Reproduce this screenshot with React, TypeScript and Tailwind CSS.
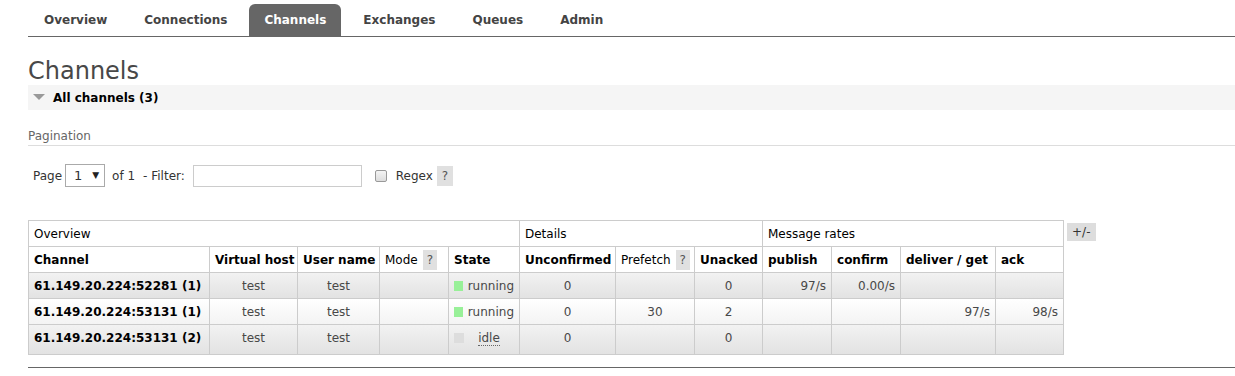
import React from 'react';

const tabs = ['Overview', 'Connections', 'Channels', 'Exchanges', 'Queues', 'Admin'];

const colWidths = [181, 88, 82, 69, 71, 96, 79, 68, 69, 69, 95, 68];

type Row = {
  channel: string;
  vhost: string;
  user: string;
  state: 'running' | 'idle';
  unconfirmed: string;
  prefetch: string;
  unacked: string;
  publish: string;
  confirm: string;
  deliver: string;
  ack: string;
};

const rows: Row[] = [
  { channel: '61.149.20.224:52281 (1)', vhost: 'test', user: 'test', state: 'running', unconfirmed: '0', prefetch: '', unacked: '0', publish: '97/s', confirm: '0.00/s', deliver: '', ack: '' },
  { channel: '61.149.20.224:53131 (1)', vhost: 'test', user: 'test', state: 'running', unconfirmed: '0', prefetch: '30', unacked: '2', publish: '', confirm: '', deliver: '97/s', ack: '98/s' },
  { channel: '61.149.20.224:53131 (2)', vhost: 'test', user: 'test', state: 'idle', unconfirmed: '0', prefetch: '', unacked: '0', publish: '', confirm: '', deliver: '', ack: '' },
];

const Help = () => (
  <span className="inline-block bg-[#e0e0e0] px-[4px] leading-[20px] text-[#555] font-normal ml-[5px]">?</span>
);

const th = 'border border-[#ccc] px-[5px] h-[26px] text-left font-bold text-black whitespace-nowrap';
const td = 'border border-[#ccc] px-[5px] whitespace-nowrap text-[#484848]';

export default function App() {
  return (
    <div className="bg-white min-h-[376px] text-[12px] text-[#484848]" style={{ fontFamily: '"DejaVu Sans", Verdana, sans-serif' }}>
      <div className="pl-[28px]">
        {/* Tabs */}
        <div className="flex items-end gap-[7px] pt-[4px] pl-[1px] border-b border-[#666]">
          {tabs.map(t => (
            <div
              key={t}
              className={
                'h-[32px] px-[15px] flex items-center font-bold text-[12px] rounded-t-[6px] ' +
                (t === 'Channels' ? 'bg-[#666] text-white' : 'text-[#444]')
              }
            >
              {t}
            </div>
          ))}
        </div>

        <h1 className="mt-[20px] text-[24px] leading-[28px] text-[#484848] font-normal">Channels</h1>

        {/* Section header */}
        <div className="h-[25px] bg-[#f5f5f5] flex items-center">
          <svg width="12" height="7" viewBox="0 0 12 7" className="ml-[5px] mr-[8px]">
            <polygon points="0,0 12,0 6,6" fill="#999" />
          </svg>
          <span className="font-bold text-black">All channels (3)</span>
        </div>

        {/* Pagination */}
        <div className="mt-[18px] pb-[1px] border-b border-[#ddd] leading-[16px] text-[#666]">Pagination</div>

        <div className="mt-[18px] flex items-center h-[23px] pl-[5px] text-[#333]">
          <span>Page</span>
          <div className="ml-[3px] h-[23px] w-[40px] border border-[#aaa] flex items-center pl-[8px] gap-[10px]">
            <span className="text-[13px]">1</span>
            <span className="text-[9px] text-[#222]">▼</span>
          </div>
          <span className="ml-[7px]">of 1</span>
          <span className="ml-[8px]">- Filter:</span>
          <input className="ml-[8px] w-[169px] h-[22px] border border-[#ccc] outline-none" />
          <span className="ml-[13px] w-[12px] h-[12px] rounded-[2px] border border-[#999] bg-gradient-to-b from-[#f4f4f4] to-[#ddd]" />
          <span className="ml-[9px]">Regex</span>
          <span className="ml-[4px] inline-block bg-[#e0e0e0] px-[5px] leading-[20px] text-[#555]">?</span>
        </div>

        {/* Table */}
        <div className="mt-[33px] flex items-start gap-[3px]">
          <table className="table-fixed border-collapse w-[1036px]">
            <colgroup>
              {colWidths.map((w, i) => (
                <col key={i} style={{ width: w }} />
              ))}
            </colgroup>
            <thead>
              <tr>
                <th colSpan={5} className={th + ' font-normal text-[#333]'}>Overview</th>
                <th colSpan={3} className={th + ' font-normal text-[#333]'}>Details</th>
                <th colSpan={4} className={th + ' font-normal text-[#333]'}>Message rates</th>
              </tr>
              <tr>
                <th className={th}>Channel</th>
                <th className={th}>Virtual host</th>
                <th className={th}>User name</th>
                <th className={th + ' font-normal text-[#484848]'}>
                  Mode<Help />
                </th>
                <th className={th}>State</th>
                <th className={th}>Unconfirmed</th>
                <th className={th + ' font-normal text-[#484848]'}>
                  Prefetch<Help />
                </th>
                <th className={th}>Unacked</th>
                <th className={th}>publish</th>
                <th className={th}>confirm</th>
                <th className={th}>deliver / get</th>
                <th className={th}>ack</th>
              </tr>
            </thead>
            <tbody>
              {rows.map((r, i) => {
                const last = i === rows.length - 1;
                const c = td + (last ? ' pb-[4px]' : '');
                return (
                  <tr
                    key={i}
                    className={
                      (i % 2 === 0 ? 'bg-gradient-to-b from-[#f2f2f2] to-[#e2e2e2] ' : 'bg-gradient-to-b from-[#ffffff] to-[#f3f3f3] ') +
                      (last ? 'h-[30px]' : 'h-[26px]')
                    }
                  >
                    <td className={c + ' font-bold text-black'}>{r.channel}</td>
                    <td className={c + ' text-center'}>{r.vhost}</td>
                    <td className={c + ' text-center'}>{r.user}</td>
                    <td className={c}></td>
                    <td className={c}>
                      {r.state === 'running' ? (
                        <span className="flex items-center">
                          <span className="w-[10px] h-[10px] bg-[#98f098] mr-[5px]" />
                          running
                        </span>
                      ) : (
                        <span className="flex items-center">
                          <span className="w-[10px] h-[10px] bg-[#dddddd]" />
                          <span className="flex-1 text-center">
                            <span className="border-b border-dotted border-[#666]">idle</span>
                          </span>
                        </span>
                      )}
                    </td>
                    <td className={c + ' text-center'}>{r.unconfirmed}</td>
                    <td className={c + ' text-center'}>{r.prefetch}</td>
                    <td className={c + ' text-center'}>{r.unacked}</td>
                    <td className={c + ' text-right'}>{r.publish}</td>
                    <td className={c + ' text-right'}>{r.confirm}</td>
                    <td className={c + ' text-right'}>{r.deliver}</td>
                    <td className={c + ' text-right'}>{r.ack}</td>
                  </tr>
                );
              })}
            </tbody>
          </table>
          <div className="mt-[3px] h-[18px] px-[5px] bg-[#ddd] text-[#333] leading-[18px]">+/-</div>
        </div>

        <div className="mt-[12px] border-b border-[#666]" />
      </div>
    </div>
  );
}
